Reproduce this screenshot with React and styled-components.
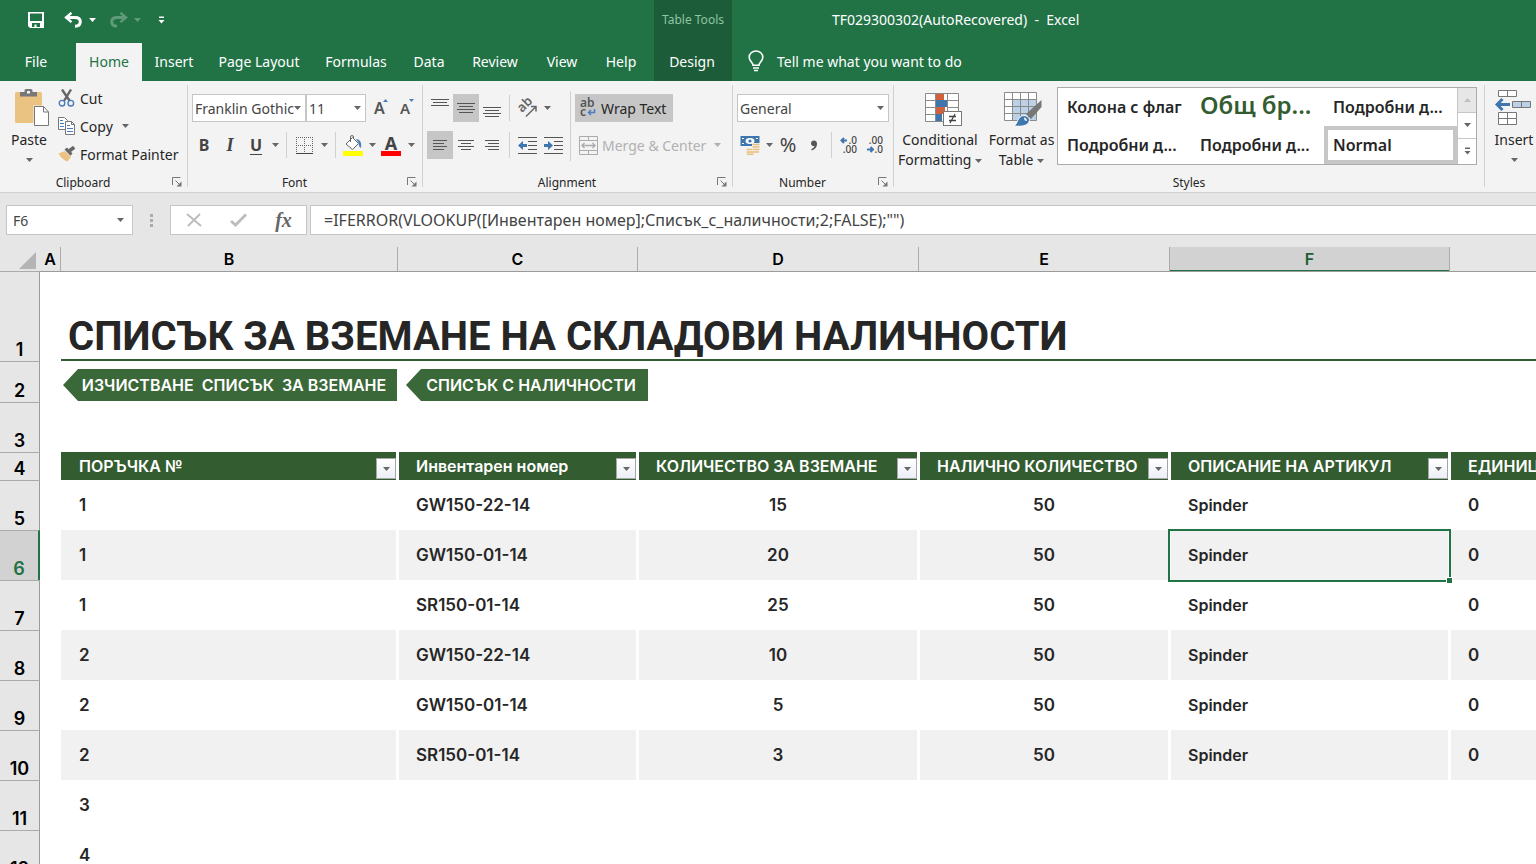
import React from "react";
import styled, { createGlobalStyle } from "styled-components";

const GlobalStyle = createGlobalStyle`
  * {
    box-sizing: border-box;
  }
  body {
    margin: 0;
    font-family: "Noto Sans", "Open Sans", sans-serif;
    font-size: 14px;
    color: #262626;
    overflow: hidden;
  }
  button, input, select {
    font: inherit;
    color: inherit;
    margin: 0;
    padding: 0;
    border: 0;
    background: none;
    outline: none;
  }
  button {
    cursor: pointer;
  }
`;

const Page = styled.div`
  display: flex;
  flex-direction: column;
  height: 100vh;
  background-color: #e6e6e6;
`;

/* ---------- title bar and tabs ---------- */

const Header = styled.header`
  display: flex;
  background-color: #217346;
  color: white;
`;

const HeaderPart = styled.div`
  flex: ${(props) => (props.$grow ? "1" : "none")};
  width: ${(props) => props.$width || "auto"};
  background-color: ${(props) => (props.$dark ? "#1d5c38" : "transparent")};
`;

const TitleRow = styled.div`
  height: 43px;
  padding-bottom: 4px;
  padding-left: ${(props) => props.$left || "0px"};
  display: flex;
  align-items: center;
  justify-content: ${(props) => (props.$center ? "center" : "flex-start")};
  white-space: pre;
`;

const ContextLabel = styled.span`
  font-size: 12px;
  color: #8fc4a4;
`;

const QuickButton = styled.button`
  width: ${(props) => props.$width};
  height: 28px;
  margin-right: ${(props) => props.$gap || "0px"};
  display: flex;
  align-items: center;
  justify-content: center;
  opacity: ${(props) => (props.$faded ? 0.28 : 1)};
`;

const TabRow = styled.nav`
  display: flex;
  height: 38px;
`;

const Tab = styled.button`
  width: ${(props) => props.$width};
  height: 38px;
  margin-right: ${(props) => props.$gap || "0px"};
  padding-bottom: 2px;
  white-space: nowrap;
  background-color: ${(props) => (props.$active ? "#f3f3f3" : "transparent")};
  color: ${(props) => (props.$active ? "#217346" : "white")};
`;

const TellMe = styled.button`
  display: flex;
  align-items: center;
  gap: 13px;
  padding-left: 16px;
  padding-bottom: 2px;
`;

/* ---------- ribbon ---------- */

const Ribbon = styled.div`
  display: flex;
  flex: none;
  background-color: #f3f3f3;
  border-bottom: 1px solid #d0d0d0;
  overflow: hidden;
`;

const Group = styled.section`
  flex: none;
  width: ${(props) => props.$width};
  display: flex;
  flex-direction: column;
`;

const GroupBody = styled.div`
  display: flex;
  height: 91px;
`;

const GroupFooter = styled.div`
  height: 20px;
  display: flex;
  align-items: center;
  padding-right: ${(props) => (props.$plain ? "0px" : "3px")};
  font-size: 12px;
`;

const GroupName = styled.span`
  flex: 1;
  text-align: center;
`;

const GroupLine = styled.div`
  flex: none;
  width: 1px;
  margin: 4px 0px 5px;
  background-color: #d0d0d0;
`;

const Launcher = styled.button`
  width: 14px;
  height: 14px;
  margin-left: 4px;
  display: flex;
  align-items: center;
  justify-content: center;
`;

const BigButton = styled.button`
  width: ${(props) => props.$width};
  display: flex;
  flex-direction: column;
  align-items: center;
  padding-top: 7px;
  line-height: 20px;
  white-space: nowrap;

  svg {
    vertical-align: middle;
  }
`;

const BigIcon = styled.span`
  height: 42px;
  padding-left: ${(props) => props.$left || "0px"};
  display: block;
`;

const BigCaret = styled.span`
  height: 20px;
  display: flex;
  align-items: center;
`;

const SmallStack = styled.div`
  display: flex;
  flex-direction: column;
  padding-top: 3px;
`;

const SmallButton = styled.button`
  height: 28px;
  display: flex;
  align-items: center;
  gap: 4px;
  white-space: nowrap;
`;

const Rows = styled.div`
  display: flex;
  flex-direction: column;
  gap: 9px;
  padding-top: 13px;
  padding-left: 4px;
`;

const Row = styled.div`
  height: 28px;
  display: flex;
  align-items: center;
`;

const Tool = styled.button`
  width: ${(props) => props.$width || "26px"};
  height: 28px;
  display: flex;
  align-items: center;
  justify-content: center;
  background-color: ${(props) => (props.$on ? "#c6c6c6" : "transparent")};
`;

const Glyph = styled.span`
  color: ${(props) => (props.$soft ? "#666" : "#444")};
  font-size: ${(props) => props.$size || "16px"};
  font-weight: ${(props) => (props.$thin ? 400 : 700)};
  font-style: ${(props) => (props.$italic ? "italic" : "normal")};
  font-family: ${(props) =>
    props.$serif ? '"Liberation Serif", serif' : "inherit"};
  text-decoration: ${(props) => (props.$under ? "underline" : "none")};
  text-decoration-thickness: 1px;
  text-underline-offset: 3px;
  line-height: 20px;
`;

const ColorGlyph = styled.span`
  width: 20px;
  height: 22px;
  display: flex;
  align-items: center;
  justify-content: center;
  border-bottom: 5px solid ${(props) => props.color};
`;

const Split = styled.span`
  width: 9px;
  height: 26px;
  display: flex;
  justify-content: center;

  &::after {
    content: "";
    width: 1px;
    background-color: #d0d0d0;
  }
`;

const Combo = styled.label`
  width: ${(props) => props.$width};
  height: 28px;
  margin-right: ${(props) => props.$gap || "0px"};
  display: flex;
  align-items: center;
  background-color: white;
  border: 1px solid #c6c6c6;
  color: #444;
  padding-right: 4px;
`;

const ComboSelect = styled.select`
  appearance: none;
  flex: 1;
  min-width: 0;
  height: 26px;
  padding-left: 2px;
  overflow: hidden;
  text-overflow: clip;
`;

const WideTools = styled.div`
  display: flex;
  flex-direction: column;
  gap: 9px;
  padding-top: 13px;
`;

const WideTool = styled.button`
  height: 28px;
  display: flex;
  align-items: center;
  align-self: flex-start;
  gap: 4px;
  padding: 0px 7px 0px 4px;
  white-space: nowrap;
  background-color: ${(props) => (props.$on ? "#c6c6c6" : "transparent")};
  color: ${(props) => (props.disabled ? "#b1b1b1" : "inherit")};
`;

const TallSplit = styled.div`
  width: 1px;
  height: 70px;
  margin: 10px 4px;
  background-color: #d0d0d0;
`;

const Gallery = styled.div`
  display: flex;
  width: 420px;
  height: 78px;
  margin-top: 6px;
  background-color: white;
  border: 1px solid #ababab;
`;

const GalleryGrid = styled.div`
  flex: 1;
  display: grid;
  grid-template-columns: repeat(3, 1fr);
  grid-template-rows: 38px 38px;
`;

const StyleItem = styled.button`
  display: flex;
  align-items: center;
  padding-left: 5px;
  padding-bottom: ${(props) => (props.$large ? "5px" : "0px")};
  border: 4px solid ${(props) => (props.$on ? "#c6c6c6" : "transparent")};
  font-size: ${(props) => (props.$large ? "24px" : "16px")};
  font-weight: 600;
  line-height: 24px;
  color: ${(props) => (props.$large ? "#335c30" : "#262626")};
  white-space: nowrap;
`;

const GalleryScroll = styled.div`
  width: 19px;
  display: grid;
  grid-template-rows: repeat(3, 1fr);
  border-left: 1px solid #c6c6c6;
`;

const ScrollButton = styled.button`
  display: flex;
  align-items: center;
  justify-content: center;
  border-bottom: 1px solid #c6c6c6;
  background-color: ${(props) => (props.disabled ? "#e6e6e6" : "white")};

  &:last-child {
    border-bottom: 0;
  }
`;

/* ---------- formula bar ---------- */

const FormulaBar = styled.div`
  display: flex;
  align-items: center;
  flex: none;
  height: 54px;
  padding: 12px 0px 12px 6px;
`;

const NameBox = styled.div`
  width: 127px;
  height: 30px;
  display: flex;
  align-items: center;
  padding: 0px 8px 0px 6px;
  background-color: white;
  border: 1px solid #c6c6c6;
`;

const BarInput = styled.input`
  flex: 1;
  min-width: 0;
  font-size: ${(props) => props.$size || "14px"};
  color: #444;
`;

const Dots = styled.span`
  width: 37px;
  display: flex;
  justify-content: center;
`;

const FormulaButtons = styled.div`
  width: 137px;
  height: 30px;
  display: flex;
  align-items: center;
  justify-content: space-around;
  background-color: white;
  border: 1px solid #c6c6c6;
`;

const FormulaBox = styled.div`
  flex: 1;
  height: 30px;
  display: flex;
  margin-left: 3px;
  padding-left: 13px;
  background-color: white;
  border: 1px solid #c6c6c6;
  border-right: 0;
`;

/* ---------- sheet ---------- */

const Sheet = styled.main`
  flex: 1;
  min-height: 0;
  overflow: hidden;
  background-color: white;
`;

const Grid = styled.table`
  width: 100%;
  table-layout: fixed;
  border-collapse: separate;
  border-spacing: 0;
  font-family: Inter, "Liberation Sans", sans-serif;
  font-size: 16px;
  font-weight: 600;
`;

const Col = styled.col`
  width: ${(props) => props.$width};
`;

const Line = styled.tr`
  height: ${(props) => props.$height};
`;

const ColHead = styled.th`
  padding: 0;
  height: 24px;
  font-weight: 600;
  color: ${(props) => (props.$on ? "#1e5c38" : "black")};
  background-color: ${(props) => (props.$on ? "#d2d2d2" : "#e6e6e6")};
  border-right: 1px solid #ababab;
  box-shadow: ${(props) => (props.$on ? "inset 0 -1px #217346" : "none")};

  &:last-child {
    border-right: 0;
  }
`;

const Corner = styled.td`
  padding: 0px 4px 2px 0px;
  background-color: #e6e6e6;
  text-align: right;
  vertical-align: bottom;
  line-height: 0;
`;

const RowHead = styled.th`
  padding: 0px 0px 1px;
  font-size: 18px;
  font-weight: 600;
  line-height: 20px;
  vertical-align: bottom;
  color: ${(props) => (props.$on ? "#217346" : "black")};
  background-color: ${(props) => (props.$on ? "#d2d2d2" : "#e6e6e6")};
  border-top: 1px solid #ababab;
  border-right: ${(props) =>
    props.$on ? "2px solid #217346" : "1px solid #9b9b9b"};
`;

const Blank = styled.td`
  padding: 0;
  border-top: ${(props) => (props.$edge ? "1px solid #9b9b9b" : "0")};
`;

const TitleCell = styled.td`
  padding: 0px 0px 0px 7px;
  vertical-align: bottom;
  border-top: 1px solid #9b9b9b;
  border-bottom: 2px solid #335c30;
`;

const Title = styled.h1`
  margin: 0;
  font-family: Roboto, "Liberation Sans", sans-serif;
  font-size: 40px;
  font-weight: 700;
  line-height: 44px;
  white-space: nowrap;
`;

const ArrowCell = styled.td`
  padding: 8px 0px 0px 2px;
  vertical-align: top;
`;

const Arrows = styled.div`
  display: flex;
  gap: 9px;
`;

const ArrowButton = styled.button`
  width: ${(props) => props.$width};
  height: 32px;
  padding-left: 8px;
  color: white;
  background-color: #3b6838;
  clip-path: polygon(0 50%, 15px 0, 100% 0, 100% 100%, 15px 100%);
  white-space: pre;
`;

const FieldHead = styled.th`
  padding: 0;
  color: white;
  font-weight: 600;
  background-color: #335c30;
  border-right: 2px solid white;
  border-left: ${(props) => (props.$first ? "0" : "1px solid white")};

  &:last-child {
    border-right: 0;
  }
`;

const FieldInner = styled.div`
  display: flex;
  height: 28px;
  align-items: center;
  justify-content: space-between;
  padding-left: ${(props) => (props.$first ? "18px" : "17px")};
  white-space: nowrap;
  overflow: hidden;
`;

const Filter = styled.button`
  flex: none;
  align-self: flex-end;
  width: 20px;
  height: 21px;
  margin-bottom: 1px;
  display: flex;
  align-items: center;
  justify-content: center;
  background-image: linear-gradient(white, #eceff7);
  border: 1px solid #a6a6a6;
`;

const Cell = styled.td`
  position: relative;
  padding: 0;
  padding-left: ${(props) =>
    props.$center ? "0px" : props.$first ? "18px" : "17px"};
  font-size: ${(props) => (props.$code ? "17px" : "16px")};
  text-align: ${(props) => (props.$center ? "center" : "left")};
  background-color: ${(props) => (props.$band ? "#f1f1f1" : "white")};
  border-right: 2px solid white;
  border-left: ${(props) => (props.$first ? "0" : "1px solid white")};

  &:last-child {
    border-right: 0;
  }
`;

const Selection = styled.span`
  position: absolute;
  z-index: 1;
  top: -1px;
  right: -3px;
  bottom: -2px;
  left: -3px;
  border: 2px solid #217346;
`;

const FillHandle = styled.span`
  position: absolute;
  right: -4px;
  bottom: -4px;
  width: 7px;
  height: 7px;
  background-color: #217346;
  border: 1px solid white;
`;

/* ---------- icons ---------- */

const Caret = ({ color = "#666", flip }) => (
  <svg width="7" height="4" viewBox="0 0 7 4">
    <path d={flip ? "M0 4L3.5 0L7 4Z" : "M0 0L7 0L3.5 4Z"} fill={color} />
  </svg>
);

const MoreIcon = ({ color = "#666" }) => (
  <svg width="7" height="8" viewBox="0 0 7 8">
    <path d="M1 0.5H6V2H1ZM0.5 4H6.5L3.5 7.5Z" fill={color} />
  </svg>
);

const SaveIcon = () => (
  <svg width="16" height="16" viewBox="0 0 16 16">
    <path
      fill="white"
      fillRule="evenodd"
      d="M0 0H16V16H2L0 14ZM2 1.5V9H14V1.5ZM4 11V15H6.5V12.5H8.5V15H12V11Z"
    />
  </svg>
);

const UndoIcon = ({ flip }) => (
  <svg width="19" height="16" viewBox="0 0 19 16">
    <g
      transform={flip ? "translate(19 0) scale(-1 1)" : undefined}
      fill="none"
      stroke="white"
      strokeWidth="3"
    >
      <path d="M3 5.5H11C14.5 5.5 16.3 7.3 16.3 9.8C16.3 12.5 14.3 14.2 11 14.2" />
      <path d="M7.5 0.8L2 5.5L7.5 10.2" strokeWidth="2.4" />
    </g>
  </svg>
);

const BulbIcon = () => (
  <svg width="16" height="22" viewBox="0 0 16 22">
    <g fill="none" stroke="white" strokeWidth="1.6">
      <path d="M5 15.2C5 12.6 1.2 11 1.2 7.2C1.2 3.6 4.2 1 8 1S14.8 3.6 14.8 7.2C14.8 11 11 12.6 11 15.2Z" />
      <path d="M5 18H11M6 20.5H10" />
    </g>
  </svg>
);

const LauncherIcon = () => (
  <svg width="10" height="10" viewBox="0 0 10 10">
    <path d="M0.5 8V0.5H8.5M3.5 3.5L8 8" fill="none" stroke="#777" />
    <path d="M9.5 4.5V9.5H4.5Z" fill="#777" />
  </svg>
);

const PasteIcon = () => (
  <svg width="36" height="38" viewBox="0 0 36 38">
    <rect x="1" y="4" width="27" height="31" rx="1.5" fill="#eac282" />
    <path
      d="M6 8.5V4H10.5V2.5Q10.5 1 12 1H17Q18.5 1 18.5 2.5V4H23V8.5Z"
      fill="#777"
    />
    <rect x="13" y="3" width="3" height="2.5" fill="#f3f3f3" />
    <path d="M19.5 17.5H31L35.5 24V38H19.5Z" fill="#f3f3f3" />
    <path d="M20.5 18.5H29.5L34.5 24V37.5H20.5Z" fill="white" stroke="#777" />
    <path d="M29.5 18.5V24H34.5" fill="none" stroke="#777" />
  </svg>
);

const CutIcon = () => (
  <svg width="18" height="18" viewBox="0 0 18 18">
    <path d="M4 0.5L11.8 12M13 0.5L6 12" stroke="#666" strokeWidth="2.4" />
    <g fill="none" stroke="#4a7ebb" strokeWidth="1.4">
      <circle cx="4" cy="14.2" r="2.8" />
      <circle cx="12.8" cy="14.2" r="2.8" />
    </g>
  </svg>
);

const CopyIcon = () => (
  <svg width="18" height="18" viewBox="0 0 18 18">
    <g fill="white" stroke="#777">
      <path d="M0.5 0.5H6.5L9.5 3.5V12.5H0.5Z" />
      <path d="M7.5 4.5H13.5L16.5 7.5V17.5H7.5Z" />
      <path d="M13.5 4.5V7.5H16.5" fill="none" />
    </g>
    <path
      d="M2 3.5H5M2 6.5H6M2 9.5H6M9 8.5H12M9 11.5H15M9 14.5H15"
      stroke="#4a7ebb"
    />
  </svg>
);

const PainterIcon = () => (
  <svg width="18" height="16" viewBox="0 0 18 16">
    <path d="M0.5 7.5L7 5L13 11L9.5 15.5C6 14.5 3 12 0.5 7.5Z" fill="#eac282" />
    <path d="M6.5 3.5L9 1.5L14.5 7.5L12.5 9.8Z" fill="#666" />
    <path d="M11.5 4.8L16.2 1.2" stroke="#666" strokeWidth="3.6" />
  </svg>
);

const GrowIcon = ({ shrink }) => (
  <svg width="16" height="20" viewBox="0 0 16 20" overflow="visible">
    <text
      x="0"
      y="16"
      fontFamily="Noto Sans"
      fontSize={shrink ? 15 : 16}
      fontWeight="600"
      fill="#555"
    >
      A
    </text>
    <path
      d={shrink ? "M9 1H14L11.5 4Z" : "M9 4H14L11.5 1Z"}
      fill="#4a7ebb"
    />
  </svg>
);

const BorderIcon = () => (
  <svg width="17" height="17" viewBox="0 0 17 17">
    <path
      d="M0.5 0V16M16.5 0V16M8.5 0V16M0 0.5H17M0 8.5H17"
      stroke="#666"
      strokeDasharray="1 1"
    />
    <path d="M0 16.5H17" stroke="#444" />
  </svg>
);

const BucketIcon = () => (
  <svg width="20" height="16" viewBox="0 0 20 16">
    <path d="M3 9L9.5 2.5L15.5 8.5L9.5 14.5Z" fill="white" stroke="#666" />
    <path d="M7.5 7V2Q7.5 0.5 9 0.5T10.5 2V4" fill="none" stroke="#666" />
    <path
      d="M13 4C17 4.5 19 7 18 13C16.5 12.5 15.5 10.5 15.7 8Z"
      fill="#4a7ebb"
    />
  </svg>
);

// each row is [x, width], rows are 3px apart
const LinesIcon = ({ rows, top = 5 }) => (
  <svg width="18" height="20" viewBox="0 0 18 20">
    {rows.map(([x, w], i) => (
      <rect key={i} x={x} y={top + i * 3} width={w} height="1" fill="#555" />
    ))}
  </svg>
);

const AngleIcon = () => (
  <svg width="20" height="18" viewBox="0 0 20 18" overflow="visible">
    <text
      transform="translate(5 14) rotate(-45)"
      fontFamily="Noto Sans"
      fontSize="13"
      fontWeight="600"
      fill="#666"
    >
      ab
    </text>
    <path
      d="M9 17.5L18.5 8M14 7.5H19V12.5"
      fill="none"
      stroke="#666"
      strokeWidth="1.5"
    />
  </svg>
);

const IndentIcon = ({ out }) => (
  <svg width="19" height="17" viewBox="0 0 19 17">
    <path
      d="M0 0.5H19M10 4.5H19M10 8.5H19M10 12.5H19M0 16.5H19"
      stroke="#555"
    />
    <path
      d={
        out ? "M0 8.5L5 4V7H9V10H5V13Z" : "M9 8.5L4 4V7H0V10H4V13Z"
      }
      fill="#3f76ad"
    />
  </svg>
);

const WrapIcon = () => (
  <svg width="18" height="20" viewBox="0 0 18 20" overflow="visible">
    <g fontFamily="Noto Sans" fontSize="12" fontWeight="600" fill="#555">
      <text x="1" y="9">
        ab
      </text>
      <text x="1" y="18">
        c
      </text>
    </g>
    <path
      d="M15.5 11V14.5H9.5M12 12L9.5 14.5L12 17"
      fill="none"
      stroke="#4a7ebb"
      strokeWidth="1.5"
    />
  </svg>
);

const MergeIcon = () => (
  <svg width="19" height="19" viewBox="0 0 19 19">
    <g fill="none" stroke="#ababab">
      <path d="M0.5 0.5H18.5V18.5H0.5ZM0.5 4.5H18.5M0.5 14.5H18.5M9.5 0V4M9.5 15V18" />
      <path
        d="M3 9.5H16M5.5 7L3 9.5L5.5 12M13.5 7L16 9.5L13.5 12"
        strokeWidth="1.4"
      />
    </g>
  </svg>
);

const MoneyIcon = () => (
  <svg width="20" height="20" viewBox="0 0 20 20">
    <rect x="0.5" y="1" width="19" height="10" fill="#3f76ad" />
    <path d="M2 3.5H4M16 3.5H18M2 8.5H4" stroke="white" />
    <ellipse cx="10" cy="6" rx="4.5" ry="3" fill="white" />
    <circle cx="10" cy="6" r="1.6" fill="#3f76ad" />
    <path d="M12 8H20V20H6V13H12Z" fill="#f3f3f3" />
    <path
      d="M12.5 9.5H19.5M12.5 12H19.5M12.5 14.5H19.5M6.5 14.5H12M6.5 17H19M7 19.2H13.5"
      stroke="#e9bf7d"
      strokeWidth="1.6"
    />
  </svg>
);

const DecimalIcon = ({ less }) => (
  <svg width="18" height="20" viewBox="0 0 18 20" overflow="visible">
    <g
      fontFamily="Noto Sans"
      fontSize="10"
      fontWeight="500"
      fill="#444"
      textAnchor="end"
    >
      <text x="17" y="9">
        {less ? ".00" : ".0"}
      </text>
      <text x="17" y="18">
        {less ? ".0" : ".00"}
      </text>
    </g>
    <path
      d={less ? "M1 14.5H7M4.5 12L7 14.5L4.5 17" : "M7 5.5H1.5M4 3L1.5 5.5L4 8"}
      fill="none"
      stroke="#3f76ad"
      strokeWidth="2"
    />
  </svg>
);

const ConditionalIcon = () => (
  <svg width="38" height="38" viewBox="0 0 38 38">
    <rect x="1.5" y="5.5" width="33" height="28" fill="white" />
    <rect x="12" y="5" width="8" height="7" fill="#d1603d" />
    <rect x="12" y="12" width="11" height="7" fill="#3f76ad" />
    <rect x="12" y="19" width="9" height="7" fill="#d1603d" />
    <rect x="12" y="26" width="6" height="7" fill="#3f76ad" />
    <path
      d="M1.5 5.5H34.5V33.5H1.5ZM1.5 12.5H12M1.5 19.5H12M1.5 26.5H12M23 12.5H34M23 19.5H34M11.5 5V33M23.5 5V33"
      fill="none"
      stroke="#8a8a8a"
    />
    <rect x="19.5" y="23.5" width="18" height="14" fill="white" stroke="#777" />
    <path
      d="M25 28.5H32M25 32.5H32M31 26L26 35"
      stroke="#444"
      strokeWidth="1.3"
    />
  </svg>
);

const FormatTableIcon = () => (
  <svg width="38" height="38" viewBox="0 0 38 38">
    <rect x="0.5" y="4.5" width="32" height="28" fill="white" />
    <rect x="9" y="12" width="24" height="20" fill="#bcd0e6" />
    <path
      d="M0.5 4.5H32.5V32.5H0.5ZM0.5 11.5H32M0.5 18.5H32M0.5 25.5H32M8.5 4V32M16.5 4V32M24.5 4V32"
      fill="none"
      stroke="#8a8a8a"
    />
    <path d="M37.5 12V19L27 31L22 26Z" fill="#777" />
    <path
      d="M10 38C14 36 13 28 20 27.5C25 28 27 32 24 35.5C21 38.5 15 38.5 10 38Z"
      fill="#3f76ad"
      stroke="white"
    />
    <path d="M20 29.5Q23 30 23 33Q20 33 20 29.5Z" fill="white" />
  </svg>
);

const InsertIcon = () => (
  <svg width="38" height="38" viewBox="0 0 38 38">
    <g stroke="#777" fill="white">
      <path d="M3.5 2.5H21.5V8.5H3.5ZM12.5 2.5V8.5" />
      <path d="M3.5 24.5H21.5V36.5H3.5ZM12.5 24.5V36.5M3.5 30.5H21.5" />
      <path d="M17.5 13.5H35.5V19.5H17.5ZM26.5 13.5V19.5" fill="#bcd0e6" />
    </g>
    <path
      d="M15 16.5H2M7.5 11L2 16.5L7.5 22"
      fill="none"
      stroke="#3f76ad"
      strokeWidth="3"
    />
  </svg>
);

/* ---------- data ---------- */

const tabs = [
  { name: "File", width: "72px", gap: "4px" },
  { name: "Home", width: "66px", active: true },
  { name: "Insert", width: "64px" },
  { name: "Page Layout", width: "106px" },
  { name: "Formulas", width: "88px" },
  { name: "Data", width: "58px" },
  { name: "Review", width: "74px" },
  { name: "View", width: "60px" },
  { name: "Help", width: "58px" },
];

const styleItems = [
  { name: "Колона с флаг" },
  { name: "Общ бр...", large: true },
  { name: "Подробни д..." },
  { name: "Подробни д..." },
  { name: "Подробни д..." },
  { name: "Normal", on: true },
];

const columns = [
  { letter: "A", width: "21px" },
  { letter: "B", width: "337px" },
  { letter: "C", width: "240px" },
  { letter: "D", width: "281px" },
  { letter: "E", width: "251px" },
  { letter: "F", width: "280px" },
  { letter: "", width: "auto" },
];

const fields = [
  "ПОРЪЧКА №",
  "Инвентарен номер",
  "КОЛИЧЕСТВО ЗА ВЗЕМАНЕ",
  "НАЛИЧНО КОЛИЧЕСТВО",
  "ОПИСАНИЕ НА АРТИКУЛ",
  "ЕДИНИЦА",
];

const records = [
  ["1", "GW150-22-14", "15", "50", "Spinder", "0"],
  ["1", "GW150-01-14", "20", "50", "Spinder", "0"],
  ["1", "SR150-01-14", "25", "50", "Spinder", "0"],
  ["2", "GW150-22-14", "10", "50", "Spinder", "0"],
  ["2", "GW150-01-14", "5", "50", "Spinder", "0"],
  ["2", "SR150-01-14", "3", "50", "Spinder", "0"],
  ["3", "", "", "", "", ""],
  ["4", "", "", "", "", ""],
];

const wide = [0, 18];
const mid = [2, 14];

const TopBar = () => (
  <Header>
    <HeaderPart $width="654px">
      <TitleRow $left="13px">
        <QuickButton $width="46px" aria-label="Save">
          <SaveIcon />
        </QuickButton>
        <QuickButton $width="28px" aria-label="Undo">
          <UndoIcon />
        </QuickButton>
        <QuickButton $width="10px" $gap="7px" aria-label="Undo history">
          <Caret color="white" />
        </QuickButton>
        <QuickButton $width="28px" $faded aria-label="Redo">
          <UndoIcon flip />
        </QuickButton>
        <QuickButton $width="10px" $gap="7px" $faded aria-label="Redo history">
          <Caret color="white" />
        </QuickButton>
        <QuickButton $width="24px" aria-label="Customize toolbar">
          <MoreIcon color="white" />
        </QuickButton>
      </TitleRow>
      <TabRow>
        {tabs.map((tab) => (
          <Tab
            key={tab.name}
            $width={tab.width}
            $gap={tab.gap}
            $active={tab.active}
          >
            {tab.name}
          </Tab>
        ))}
      </TabRow>
    </HeaderPart>
    <HeaderPart $width="78px" $dark>
      <TitleRow $center>
        <ContextLabel>Table Tools</ContextLabel>
      </TitleRow>
      <TabRow>
        <Tab $width="76px">Design</Tab>
      </TabRow>
    </HeaderPart>
    <HeaderPart $grow>
      <TitleRow $left="100px">TF029300302(AutoRecovered)  -  Excel</TitleRow>
      <TabRow>
        <TellMe>
          <BulbIcon />
          Tell me what you want to do
        </TellMe>
      </TabRow>
    </HeaderPart>
  </Header>
);

const Footer = ({ name, plain }) => (
  <GroupFooter $plain={plain}>
    <GroupName>{name}</GroupName>
    {!plain && (
      <Launcher aria-label={name + " settings"}>
        <LauncherIcon />
      </Launcher>
    )}
  </GroupFooter>
);

const ClipboardGroup = () => (
  <Group $width="187px">
    <GroupBody>
      <BigButton $width="58px">
        <BigIcon $left="6px">
          <PasteIcon />
        </BigIcon>
        Paste
        <BigCaret>
          <Caret />
        </BigCaret>
      </BigButton>
      <SmallStack>
        <SmallButton>
          <CutIcon />
          Cut
        </SmallButton>
        <SmallButton>
          <CopyIcon />
          Copy
          <Tool as="span" $width="18px">
            <Caret />
          </Tool>
        </SmallButton>
        <SmallButton>
          <PainterIcon />
          Format Painter
        </SmallButton>
      </SmallStack>
    </GroupBody>
    <Footer name="Clipboard" />
  </Group>
);

const FontGroup = () => (
  <Group $width="234px">
    <GroupBody>
      <Rows>
        <Row>
          <Combo $width="114px">
            <ComboSelect aria-label="Font">
              <option>Franklin Gothic Medium</option>
            </ComboSelect>
            <Caret />
          </Combo>
          <Combo $width="60px" $gap="3px">
            <ComboSelect aria-label="Font size">
              <option>11</option>
            </ComboSelect>
            <Caret />
          </Combo>
          <Tool aria-label="Grow font">
            <GrowIcon />
          </Tool>
          <Tool aria-label="Shrink font">
            <GrowIcon shrink />
          </Tool>
        </Row>
        <Row>
          <Tool $width="24px">
            <Glyph>B</Glyph>
          </Tool>
          <Tool $width="28px">
            <Glyph $serif $italic $size="18px">
              I
            </Glyph>
          </Tool>
          <Tool $width="24px">
            <Glyph $under>U</Glyph>
          </Tool>
          <Tool $width="14px" aria-label="Underline style">
            <Caret />
          </Tool>
          <Split />
          <Tool aria-label="Borders">
            <BorderIcon />
          </Tool>
          <Tool $width="14px" aria-label="Border style">
            <Caret />
          </Tool>
          <Split />
          <Tool aria-label="Fill color">
            <ColorGlyph color="#ffff00">
              <BucketIcon />
            </ColorGlyph>
          </Tool>
          <Tool $width="12px" aria-label="Fill colors">
            <Caret />
          </Tool>
          <Tool aria-label="Font color">
            <ColorGlyph color="#ff0000">
              <Glyph $size="18px">A</Glyph>
            </ColorGlyph>
          </Tool>
          <Tool $width="14px" aria-label="Font colors">
            <Caret />
          </Tool>
        </Row>
      </Rows>
    </GroupBody>
    <Footer name="Font" />
  </Group>
);

const AlignmentGroup = () => (
  <Group $width="309px">
    <GroupBody>
      <Rows>
        <Row>
          <Tool aria-label="Top align">
            <LinesIcon rows={[wide, mid, wide]} top={1} />
          </Tool>
          <Tool $on aria-label="Middle align">
            <LinesIcon rows={[wide, mid, wide, mid]} top={5} />
          </Tool>
          <Tool aria-label="Bottom align">
            <LinesIcon rows={[wide, mid, wide, mid]} top={9} />
          </Tool>
          <Split />
          <Tool aria-label="Orientation">
            <AngleIcon />
          </Tool>
          <Tool $width="14px" aria-label="Orientation options">
            <Caret />
          </Tool>
        </Row>
        <Row>
          <Tool $on aria-label="Align left">
            <LinesIcon rows={[[2, 14], [2, 11], [2, 14], [2, 11]]} />
          </Tool>
          <Tool aria-label="Center">
            <LinesIcon rows={[[1, 16], [4, 10], [1, 16], [4, 10]]} />
          </Tool>
          <Tool aria-label="Align right">
            <LinesIcon rows={[[2, 14], [5, 11], [2, 14], [5, 11]]} />
          </Tool>
          <Split />
          <Tool aria-label="Decrease indent">
            <IndentIcon out />
          </Tool>
          <Tool aria-label="Increase indent">
            <IndentIcon />
          </Tool>
        </Row>
      </Rows>
      <TallSplit />
      <WideTools>
        <WideTool $on>
          <WrapIcon />
          Wrap Text
        </WideTool>
        <WideTool disabled>
          <MergeIcon />
          Merge &amp; Center
          <Tool as="span" $width="14px">
            <Caret color="#b1b1b1" />
          </Tool>
        </WideTool>
      </WideTools>
    </GroupBody>
    <Footer name="Alignment" />
  </Group>
);

const NumberGroup = () => (
  <Group $width="160px">
    <GroupBody>
      <Rows>
        <Row>
          <Combo $width="152px">
            <ComboSelect aria-label="Number format">
              <option>General</option>
            </ComboSelect>
            <Caret />
          </Combo>
        </Row>
        <Row>
          <Tool aria-label="Accounting format">
            <MoneyIcon />
          </Tool>
          <Tool $width="12px" aria-label="Accounting formats">
            <Caret />
          </Tool>
          <Tool>
            <Glyph $thin $size="20px">
              %
            </Glyph>
          </Tool>
          <Tool aria-label="Comma style">
            <svg width="8" height="11" viewBox="0 0 8 11">
              <path
                d="M4 0.5C6 0.5 7 1.8 7 4C7 7 5 9.5 1.5 10.5V9C3.5 8 4.4 7 4.4 6C2.5 6.4 1 5.2 1 3.5C1 1.6 2.2 0.5 4 0.5Z"
                fill="#555"
              />
            </svg>
          </Tool>
          <Split />
          <Tool aria-label="Increase decimal">
            <DecimalIcon />
          </Tool>
          <Tool aria-label="Decrease decimal">
            <DecimalIcon less />
          </Tool>
        </Row>
      </Rows>
    </GroupBody>
    <Footer name="Number" />
  </Group>
);

const StylesGroup = () => (
  <Group $width="590px">
    <GroupBody>
      <BigButton $width="92px">
        <BigIcon $left="6px">
          <ConditionalIcon />
        </BigIcon>
        <span>Conditional</span>
        <span>
          Formatting <Caret />
        </span>
      </BigButton>
      <BigButton $width="71px">
        <BigIcon $left="2px">
          <FormatTableIcon />
        </BigIcon>
        <span>Format as</span>
        <span>
          Table <Caret />
        </span>
      </BigButton>
      <Gallery>
        <GalleryGrid>
          {styleItems.map((item, i) => (
            <StyleItem key={i} $on={item.on} $large={item.large}>
              {item.name}
            </StyleItem>
          ))}
        </GalleryGrid>
        <GalleryScroll>
          <ScrollButton disabled aria-label="Previous styles">
            <Caret color="#c0c0c0" flip />
          </ScrollButton>
          <ScrollButton aria-label="Next styles">
            <Caret />
          </ScrollButton>
          <ScrollButton aria-label="More styles">
            <MoreIcon />
          </ScrollButton>
        </GalleryScroll>
      </Gallery>
    </GroupBody>
    <Footer name="Styles" plain />
  </Group>
);

const CellsGroup = () => (
  <Group $width="58px">
    <GroupBody>
      <BigButton $width="58px">
        <BigIcon>
          <InsertIcon />
        </BigIcon>
        Insert
        <BigCaret>
          <Caret />
        </BigCaret>
      </BigButton>
    </GroupBody>
  </Group>
);

const Formula = () => (
  <FormulaBar>
    <NameBox>
      <BarInput aria-label="Name box" defaultValue="F6" />
      <Caret />
    </NameBox>
    <Dots>
      <svg width="3" height="13" viewBox="0 0 3 13">
        <path d="M0 0H3V3H0ZM0 5H3V8H0ZM0 10H3V13H0Z" fill="#ababab" />
      </svg>
    </Dots>
    <FormulaButtons>
      <Tool aria-label="Cancel">
        <svg width="16" height="14" viewBox="0 0 16 14">
          <path d="M1 1L15 13M14 1L2 13" stroke="#bdbdbd" strokeWidth="2" />
        </svg>
      </Tool>
      <Tool aria-label="Enter">
        <svg width="17" height="14" viewBox="0 0 17 14">
          <path
            d="M1 8L5.5 12L16 1.5"
            fill="none"
            stroke="#bdbdbd"
            strokeWidth="2.8"
          />
        </svg>
      </Tool>
      <Tool>
        <Glyph $serif $italic $soft $size="20px">
          fx
        </Glyph>
      </Tool>
    </FormulaButtons>
    <FormulaBox>
      <BarInput
        $size="16px"
        aria-label="Formula"
        defaultValue={
          '=IFERROR(VLOOKUP([Инвентарен номер];Списък_с_наличности;2;FALSE);"")'
        }
      />
    </FormulaBox>
  </FormulaBar>
);

const App = () => {
  return (
    <Page>
      <GlobalStyle />
      <TopBar />
      <Ribbon>
        <ClipboardGroup />
        <GroupLine />
        <FontGroup />
        <GroupLine />
        <AlignmentGroup />
        <GroupLine />
        <NumberGroup />
        <GroupLine />
        <StylesGroup />
        <GroupLine />
        <CellsGroup />
      </Ribbon>
      <Formula />
      <Sheet>
        <Grid>
          <colgroup>
            <Col $width="40px" />
            {columns.map((c, i) => (
              <Col key={i} $width={c.width} />
            ))}
          </colgroup>
          <thead>
            <tr>
              <Corner>
                <svg width="17" height="17" viewBox="0 0 17 17">
                  <path d="M17 0V17H0Z" fill="#b4b4b4" />
                </svg>
              </Corner>
              {columns.map((c, i) => (
                <ColHead key={i} $on={c.letter === "F"}>
                  {c.letter}
                </ColHead>
              ))}
            </tr>
          </thead>
          <tbody>
            <Line $height="90px">
              <RowHead>1</RowHead>
              <Blank $edge />
              <TitleCell colSpan={6}>
                <Title>СПИСЪК ЗА ВЗЕМАНЕ НА СКЛАДОВИ НАЛИЧНОСТИ</Title>
              </TitleCell>
            </Line>
            <Line $height="41px">
              <RowHead>2</RowHead>
              <Blank />
              <ArrowCell colSpan={6}>
                <Arrows>
                  <ArrowButton $width="334px">
                    {"ИЗЧИСТВАНЕ  СПИСЪК  ЗА ВЗЕМАНЕ"}
                  </ArrowButton>
                  <ArrowButton $width="242px">СПИСЪК С НАЛИЧНОСТИ</ArrowButton>
                </Arrows>
              </ArrowCell>
            </Line>
            <Line $height="50px">
              <RowHead>3</RowHead>
              <Blank colSpan={7} />
            </Line>
            <Line $height="28px">
              <RowHead>4</RowHead>
              <Blank />
              {fields.map((name, i) => (
                <FieldHead key={name} $first={i === 0}>
                  <FieldInner $first={i === 0}>
                    {name}
                    {i < 5 && (
                      <Filter aria-label={"Filter " + name}>
                        <Caret />
                      </Filter>
                    )}
                  </FieldInner>
                </FieldHead>
              ))}
            </Line>
            {records.map((record, r) => (
              <Line key={r} $height="50px">
                <RowHead $on={r === 1}>{r + 5}</RowHead>
                <Blank />
                {record.map((value, i) => (
                  <Cell
                    key={i}
                    $first={i === 0}
                    $code={i !== 4}
                    $center={i === 2 || i === 3}
                    $band={r % 2 === 1 && r < 6}
                  >
                    {value}
                    {r === 1 && i === 4 && (
                      <Selection>
                        <FillHandle />
                      </Selection>
                    )}
                  </Cell>
                ))}
              </Line>
            ))}
          </tbody>
        </Grid>
      </Sheet>
    </Page>
  );
};

export default App;
